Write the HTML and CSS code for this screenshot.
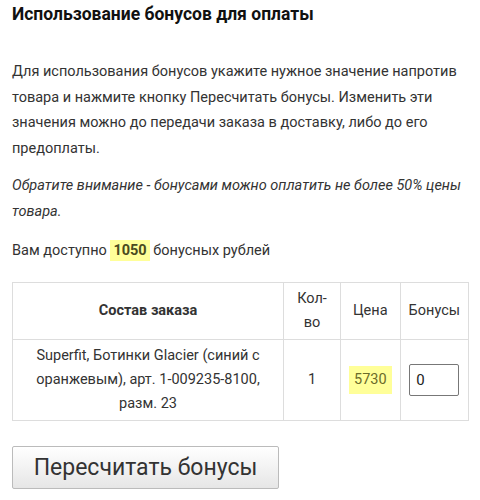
FILE: index.html
```html
<!DOCTYPE html>
<html lang="ru">
<head>
    <meta charset="UTF-8">
    <meta name="viewport" content="width=device-width, initial-scale=1.0">
    <title>Использование бонусов</title>
    <link rel="stylesheet" href="styles.css">
</head>
<body>
    <div class="bonus-page">
        <!-- Заголовок -->
        <h2>Использование бонусов для оплаты</h2>

        <p class="intro">Для использования бонусов укажите нужное значение напротив товара и нажмите кнопку Пересчитать бонусы. Изменить эти значения можно до передачи заказа в доставку, либо до его предоплаты.</p>

        <p class="note">Обратите внимание - бонусами можно оплатить не более 50% цены товара.</p>

        <p>Вам доступно <span class="bonus-amount">1050</span> бонусных рублей</p>

        <!-- Таблица заказа -->
        <form action="" method="POST">
            <table class="order-table">
                <tr>
                    <th class="col-name">Состав заказа</th>
                    <td class="col-qty">Кол-во</td>
                    <td class="col-price">Цена</td>
                    <td class="col-bonus">Бонусы</td>
                </tr>
                <tr>
                    <td>Superfit, Ботинки Glacier (синий с оранжевым), арт. 1-009235-8100, разм. 23</td>
                    <td>1</td>
                    <td><span class="price">5730</span></td>
                    <td><input type="text" name="bonus" value="0" class="bonus-input"></td>
                </tr>
            </table>

            <input type="submit" value="Пересчитать бонусы" class="recalc-btn">
        </form>
    </div>
</body>
</html>
```

FILE: styles.css
```css
* {
    margin: 0;
    padding: 0;
    box-sizing: border-box;
}

body {
    font-family: Roboto, "Liberation Sans", sans-serif;
    background-color: #fff;
    color: #333;
}

.bonus-page {
    padding: 2px 12px 12px;
}

h2 {
    font-size: 17.5px;
    font-weight: bold;
    color: #111;
    line-height: 24px;
    margin-bottom: 33px;
}

p {
    font-size: 14.5px;
    line-height: 25.7px;
    margin-bottom: 14px;
}

.intro {
    margin-bottom: 11px;
}

.note {
    font-style: italic;
}

.bonus-amount {
    background: #ffff99;
    color: #4a4a1e;
    font-weight: bold;
    padding: 2px 3px;
}

.order-table {
    width: 457px;
    border-collapse: collapse;
    margin-top: 18px;
    font-size: 14.5px;
    line-height: 24px;
}

.order-table td, .order-table th {
    border: 1px solid #ddd;
    text-align: center;
    padding: 4px 8px;
}

.order-table th {
    font-weight: bold;
}

.col-name {
    width: 272px;
}

.col-qty {
    width: 57px;
}

.col-price {
    width: 56px;
}

.price {
    display: inline-block;
    background: #ffff99;
    color: #6b6b2a;
    padding: 2px 5px;
}

.bonus-input {
    width: 50px;
    height: 32px;
    padding: 0 6px;
    border: 1px solid #777;
    border-radius: 2px;
    font-family: Roboto, "Liberation Sans", sans-serif;
    font-size: 15px;
    color: #222;
}

.recalc-btn {
    margin-top: 25px;
    width: 267px;
    height: 43px;
    font-family: Roboto, "Liberation Sans", sans-serif;
    font-size: 23px;
    color: #333;
    background: linear-gradient(#fff, #e6e6e6);
    border: 1px solid #bbb;
    border-radius: 2px;
    cursor: pointer;
}
```
